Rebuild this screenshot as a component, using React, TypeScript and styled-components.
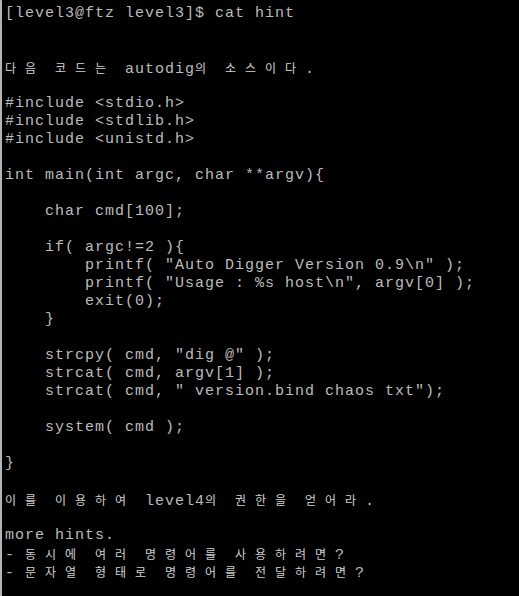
import React from "react";
import styled, { createGlobalStyle } from "styled-components";

const Global = createGlobalStyle`
  html, body {
    margin: 0;
    padding: 0;
    background: #000;
  }
`;

const Terminal = styled.div`
  box-sizing: border-box;
  width: 519px;
  height: 596px;
  overflow: hidden;
  background: #000;
  border-left: 2px solid #b4b4b4;
  padding: 5px 0 0 3px;
  display: flex;
  flex-direction: column;
  font-family: "Liberation Mono", "Courier New", monospace;
  font-size: 15px;
  letter-spacing: 1px;
  color: #bcbcbc;
`;

const Line = styled.div`
  height: 18px;
  line-height: 18px;
  white-space: pre;
`;

const Wide = styled.span`
  display: inline-block;
  width: 20px;
  letter-spacing: 0;
  font-family: "Noto Sans CJK KR", "Noto Sans", sans-serif;
  font-size: 12px;
  color: #d0d0d0;
  text-align: left;
  vertical-align: baseline;
`;

const lines: string[] = [
  "[level3@ftz level3]$ cat hint",
  "",
  "",
  "다음 코드는 autodig의 소스이다.",
  "",
  "#include <stdio.h>",
  "#include <stdlib.h>",
  "#include <unistd.h>",
  "",
  "int main(int argc, char **argv){",
  "",
  "    char cmd[100];",
  "",
  "    if( argc!=2 ){",
  '        printf( "Auto Digger Version 0.9\\n" );',
  '        printf( "Usage : %s host\\n", argv[0] );',
  "        exit(0);",
  "    }",
  "",
  '    strcpy( cmd, "dig @" );',
  "    strcat( cmd, argv[1] );",
  '    strcat( cmd, " version.bind chaos txt");',
  "",
  "    system( cmd );",
  "",
  "}",
  "",
  "이를 이용하여 level4의 권한을 얻어라.",
  "",
  "more hints.",
  "- 동시에 여러 명령어를 사용하려면?",
  "- 문자열 형태로 명령어를 전달하려면?",
];

const isWide = (ch: string) => /[\uAC00-\uD7A3]/.test(ch);

function renderLine(text: string) {
  if (text === "") return "\u00a0";
  const out: React.ReactNode[] = [];
  let buf = "";
  Array.from(text).forEach((ch, i) => {
    if (isWide(ch)) {
      if (buf) {
        out.push(buf);
        buf = "";
      }
      out.push(<Wide key={i}>{ch}</Wide>);
    } else {
      buf += ch;
    }
  });
  if (buf) out.push(buf);
  return out;
}

export default function App() {
  return (
    <>
      <Global />
      <Terminal>
        {lines.map((l, i) => (
          <Line key={i}>{renderLine(l)}</Line>
        ))}
      </Terminal>
    </>
  );
}
